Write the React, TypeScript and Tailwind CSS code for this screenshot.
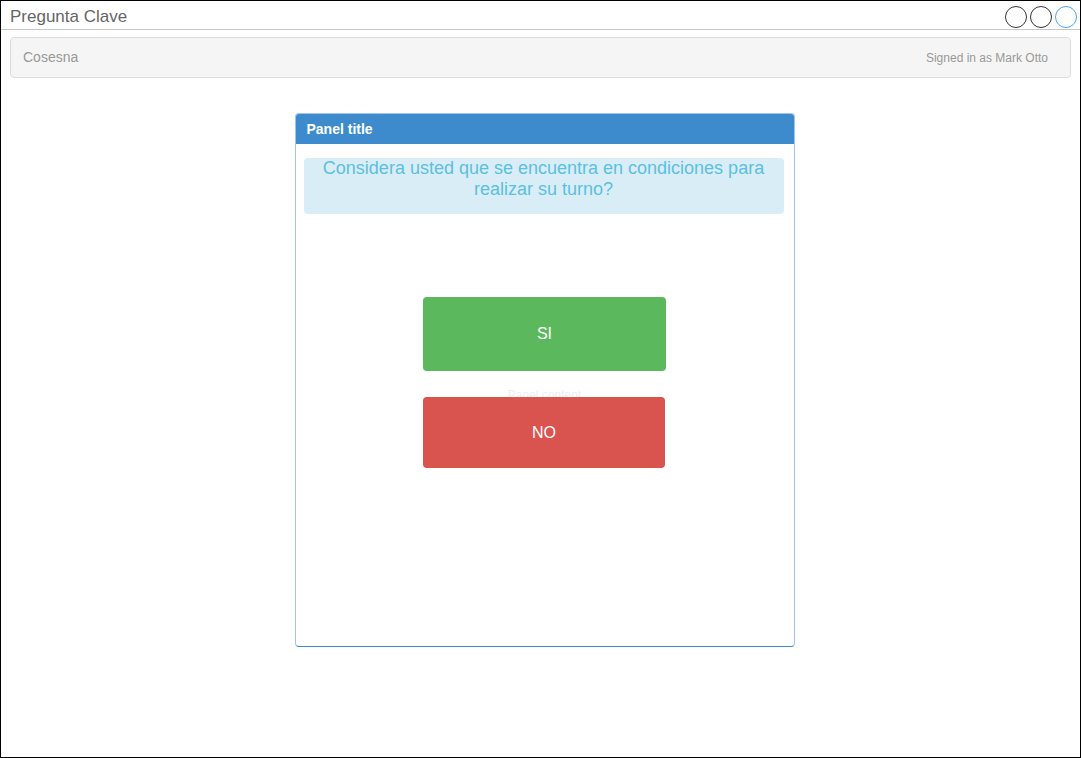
export default function App() {
  return (
    <div className="w-[1081px] h-[758px] border border-black bg-white flex flex-col" style={{ fontFamily: '"Liberation Sans", Arial, sans-serif' }}>
      <div className="h-[29px] flex items-center justify-between pl-[9px] pr-[3px] pt-[3px] border-b border-[#c8c8c8]">
        <span className="text-[17px] text-[#666666]">Pregunta Clave</span>
        <div className="flex gap-[3px]">
          <span className="w-[22px] h-[22px] rounded-full border border-[#333333]"></span>
          <span className="w-[22px] h-[22px] rounded-full border border-[#333333]"></span>
          <span className="w-[22px] h-[22px] rounded-full border border-[#4da3f5]"></span>
        </div>
      </div>
      <div className="mx-[9px] mt-[7px] h-[41px] bg-[#f5f5f5] border border-[#dddddd] rounded-[4px] flex items-center justify-between pl-[12px] pr-[22px]">
        <span className="text-[14px] text-[#999999]">Cosesna</span>
        <span className="text-[12px] text-[#999999]">Signed in as Mark Otto</span>
      </div>
      <div className="flex justify-center mt-[35px] pl-[8px]">
        <div className="w-[500px] h-[534px] rounded-[4px] border border-[#9fc5ea] border-b-[#3d8bcd] flex flex-col overflow-hidden">
          <div className="h-[30px] bg-[#3d8bcd] flex items-center px-[11px]">
            <span className="text-[14px] font-bold text-white">Panel title</span>
          </div>
          <div className="pl-[8px] pr-[10px] pt-[14px] flex flex-col items-center">
            <div className="w-full bg-[#d9edf7] rounded-[4px] text-center text-[18px] leading-[21px] text-[#5bc0de] pt-0 pb-[14px]">
              Considera usted que se encuentra en condiciones para<br />realizar su turno?
            </div>
            <button className="mt-[83px] ml-[2px] w-[243px] h-[74px] bg-[#5cb85c] rounded-[4px] text-white text-[16px]">SI</button>
            <div className="mt-[17px] ml-[2px] text-[12px] leading-[14px] text-[#eeeeee]">Panel content</div>
            <button className="-mt-[5px] ml-[1px] w-[242px] h-[71px] bg-[#d9534f] rounded-[4px] text-white text-[16px]">NO</button>
          </div>
        </div>
      </div>
    </div>
  );
}
